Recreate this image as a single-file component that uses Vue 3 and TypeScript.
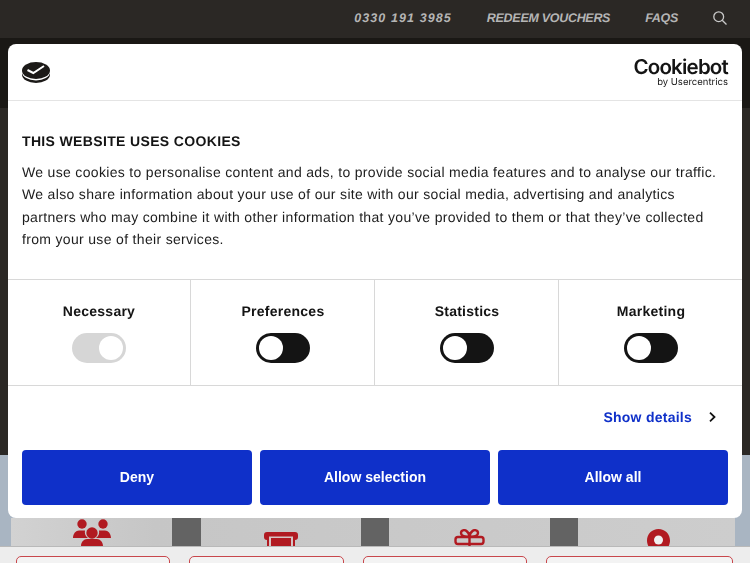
<script setup lang="ts">
interface Toggle {
  label: string
  locked?: boolean
}

const navItems: string[] = ['0330 191 3985', 'REDEEM VOUCHERS', 'FAQS']

const toggles: Toggle[] = [
  { label: 'Necessary', locked: true },
  { label: 'Preferences' },
  { label: 'Statistics' },
  { label: 'Marketing' },
]

const buttons: string[] = ['Deny', 'Allow selection', 'Allow all']
const cards: string[] = ['card-a', 'card-b', 'card-c', 'card-d']
</script>

<template>
  <div class="page">
    <!-- Site behind the dialog -->
    <header class="topbar">
      <span v-for="item in navItems" :key="item" class="nav-item">{{ item }}</span>
      <svg class="search" width="14" height="14" viewBox="0 0 14 14" fill="none" stroke="#c9c9c9" stroke-width="1.3">
        <circle cx="5.700" cy="5.700" r="4.900" />
        <path d="M9.200 9.200 13.500 13.500" />
      </svg>
    </header>
    <div class="hero-band"></div>
    <div class="hero"></div>
    <section class="strip">
      <div class="strip-inner">
        <div class="strip-cell">
          <svg class="people" width="38" height="27" viewBox="0 0 38 27" fill="#b11a21">
            <circle cx="9" cy="5" r="4.700" />
            <circle cx="30" cy="5" r="4.700" />
            <circle cx="19" cy="14" r="5.700" />
            <path d="M0 19c0-4.500 3-7.500 6-7.500h6c-.6 3 .4 6 3 7.500zM38 19c0-4.500-3-7.500-6-7.500h-6c.6 3-.4 6-3 7.500zM8 27c0-4 3-7 6-7h10c3 0 6 3 6 7z" />
          </svg>
        </div>
        <div class="strip-gap"></div>
        <div class="strip-cell">
          <svg class="ticket" width="34" height="14" viewBox="0 0 34 14" fill="#b11a21">
            <path d="M3 0h28a3 3 0 0 1 3 3v2a3 3 0 0 1-3 3v6H3V8a3 3 0 0 1-3-3V3a3 3 0 0 1 3-3z" />
            <rect x="5" y="4.500" width="24" height="9.500" fill="#d6c4c4" />
            <rect x="7" y="6" width="20" height="8" />
          </svg>
        </div>
        <div class="strip-gap"></div>
        <div class="strip-cell">
          <svg class="gift" width="31" height="17" viewBox="0 0 31 17" fill="none" stroke="#b11a21" stroke-width="2.400">
            <path d="M15.500 8C12 8 7 7 7 4S10.500.5 12.500 2s3 4 3 6zM15.500 8C19 8 24 7 24 4S20.500.5 18.500 2s-3 4-3 6z" />
            <rect x="1.500" y="8" width="28" height="7" rx="2.500" />
            <path d="M15.500 8v9" />
          </svg>
        </div>
        <div class="strip-gap"></div>
        <div class="strip-cell">
          <svg class="pin" width="23" height="17" viewBox="0 0 23 17">
            <path d="M11.500 0C5 0 0 5 0 11.500 0 13.500.5 15.300 1.300 17h20.400c.8-1.700 1.300-3.500 1.300-5.500C23 5 18 0 11.500 0z" fill="#b11a21" />
            <circle cx="11.500" cy="11" r="4.500" fill="#f0f0f0" />
          </svg>
        </div>
      </div>
    </section>
    <section class="cards">
      <div v-for="card in cards" :key="card" class="card" :class="card"></div>
    </section>

    <!-- Cookie dialog -->
    <div class="dialog">
      <div class="dialog-head">
        <svg width="28" height="21" viewBox="0 0 28 21">
          <ellipse cx="14" cy="12.500" rx="14" ry="8.500" fill="#1c1a18" />
          <ellipse cx="14" cy="9.900" rx="14" ry="8.500" fill="#fff" />
          <ellipse cx="14" cy="8.500" rx="14" ry="8.500" fill="#1c1a18" />
          <path d="M5.500 8 11.300 11 22 4" fill="none" stroke="#fff" stroke-width="2" />
        </svg>
        <div class="brand">
          <span class="brand-name">Cookiebot</span>
          <span class="brand-sub">by Usercentrics</span>
        </div>
      </div>

      <div class="dialog-body">
        <h2 class="title">THIS WEBSITE USES COOKIES</h2>
        <p class="text">We use cookies to personalise content and ads, to provide social media features and to analyse our traffic. We also share information about your use of our site with our social media, advertising and analytics partners who may combine it with other information that you’ve provided to them or that they’ve collected from your use of their services.</p>
      </div>

      <div class="toggles">
        <div v-for="toggle in toggles" :key="toggle.label" class="toggle-cell">
          <strong class="toggle-label">{{ toggle.label }}</strong>
          <span class="switch" :class="{ locked: toggle.locked }"><span class="knob"></span></span>
        </div>
      </div>

      <div class="details">
        <span class="details-link">Show details</span>
        <svg width="7" height="10" viewBox="0 0 7 10" fill="none" stroke="#141414" stroke-width="1.800">
          <path d="M1 .7 5.500 5 1 9.300" />
        </svg>
      </div>

      <div class="actions">
        <button v-for="label in buttons" :key="label" class="action" type="button">{{ label }}</button>
      </div>
    </div>
  </div>
</template>

<style>
html,
body {
  margin: 0;
  overflow: hidden;
}
</style>

<style scoped>
.page {
  width: 750px;
  height: 563px;
  overflow: hidden;
  display: flex;
  flex-direction: column;
  background: #ededed;
  font-family: "Liberation Sans", Arial, sans-serif;
  text-rendering: geometricPrecision;
}

/* Site header */
.topbar {
  flex: none;
  height: 38px;
  box-sizing: border-box;
  padding: 0 23px 2px 0;
  display: flex;
  align-items: center;
  justify-content: flex-end;
  background: #2b2825;
}

.nav-item {
  margin-right: 35px;
  font-size: 12.500px;
  font-weight: 700;
  font-style: italic;
  letter-spacing: -0.300px;
  color: #b5b5b5;
}

.nav-item:first-child {
  letter-spacing: 1.100px;
}

.search {
  flex: none;
}

.hero-band {
  flex: none;
  height: 70px;
  background: #1a1815;
}

.hero {
  flex: none;
  height: 347px;
  background: #2b2825;
}

/* Strip with icons */
.strip {
  flex: none;
  height: 91px;
  box-sizing: border-box;
  padding: 63px 0 0 11px;
  background: #a9b5c2;
}

.strip-inner {
  width: 724px;
  height: 28px;
  display: grid;
  grid-template-columns: 161px 29px 160px 28px 161px 28px 157px;
  background: linear-gradient(90deg, #d2d2d2, #c6c6c6 20%, #cdcdcd);
  overflow: hidden;
}

.strip-cell {
  display: flex;
  justify-content: center;
}

.strip-gap {
  background: #636363;
}

.people {
  margin-top: 1px;
}

.ticket {
  margin-top: 14px;
}

.gift {
  margin-top: 11px;
}

.pin {
  margin: 11px 0 0 3px;
}

/* Cards below */
.cards {
  flex: 1;
  display: flex;
  gap: 19px;
  padding: 9px 17px 0 16px;
  background: #ededed;
  border-top: 1px solid #b9b9b9;
}

.card {
  height: 40px;
  box-sizing: border-box;
  border: 1px solid #c8474c;
  border-radius: 5px;
  background: #f3f3f3;
}

.card-a {
  width: 154px;
}

.card-b {
  width: 156px;
}

.card-c {
  width: 164px;
}

.card-d {
  width: 188px;
}

/* Dialog */
.dialog {
  position: fixed;
  left: 8px;
  top: 44px;
  width: 734px;
  height: 474px;
  border-radius: 8px;
  background: #fff;
  color: #141414;
  overflow: hidden;
}

.dialog-head {
  height: 57px;
  box-sizing: border-box;
  padding: 0 14px;
  display: flex;
  align-items: center;
  justify-content: space-between;
  border-bottom: 1px solid #e4e4e4;
}

.brand {
  display: flex;
  flex-direction: column;
  align-items: flex-end;
}

.brand-name {
  font-family: Inter, sans-serif;
  font-size: 20.500px;
  font-weight: 600;
  letter-spacing: -0.800px;
  line-height: 19px;
}

.brand-sub {
  font-size: 9.500px;
  line-height: 10px;
  font-family: Inter, sans-serif;
  margin-top: 2px;
}

.dialog-body {
  height: 178px;
  box-sizing: border-box;
  padding: 31px 14px 0;
}

.title {
  margin: 0 0 10.500px;
  font-size: 14px;
  line-height: 18px;
  font-weight: 700;
  letter-spacing: 0.350px;
}

.text {
  margin: 0;
  font-size: 14px;
  line-height: 22.500px;
  letter-spacing: 0.325px;
  color: #1c1c1c;
}

.toggles {
  height: 105px;
  display: grid;
  grid-template-columns: 183px 184px 184px 183px;
  border-top: 1px solid #d8d8d8;
  border-bottom: 1px solid #d8d8d8;
}

.toggle-cell {
  display: flex;
  flex-direction: column;
  align-items: center;
  padding: 23px 0 0 1px;
  border-right: 1px solid #d8d8d8;
}

.toggle-cell:first-child {
  padding-left: 0;
}

.toggle-cell:last-child {
  border-right: none;
}

.toggle-label {
  font-size: 14px;
  line-height: 17px;
  letter-spacing: 0.250px;
}

.switch {
  margin-top: 13px;
  width: 54px;
  height: 30px;
  box-sizing: border-box;
  padding: 3px;
  border-radius: 15px;
  background: #141414;
  display: flex;
  justify-content: flex-start;
}

.switch.locked {
  background: #d6d6d6;
  justify-content: flex-end;
}

.knob {
  width: 24px;
  height: 24px;
  border-radius: 50%;
  background: #fff;
}

.details {
  height: 64px;
  box-sizing: border-box;
  padding: 0 26px 2px 0;
  display: flex;
  align-items: center;
  justify-content: flex-end;
  gap: 17px;
}

.details-link {
  font-size: 14px;
  font-weight: 700;
  letter-spacing: 0.250px;
  color: #0f30c9;
}

.actions {
  padding: 0 14px;
  display: grid;
  grid-template-columns: repeat(3, 1fr);
  gap: 8px;
}

.action {
  height: 55px;
  padding: 0 0 2px;
  border: none;
  border-radius: 4px;
  background: #0f30c9;
  color: #fff;
  font-family: inherit;
  font-size: 14px;
  font-weight: 700;
  letter-spacing: 0.020px;
}
</style>
